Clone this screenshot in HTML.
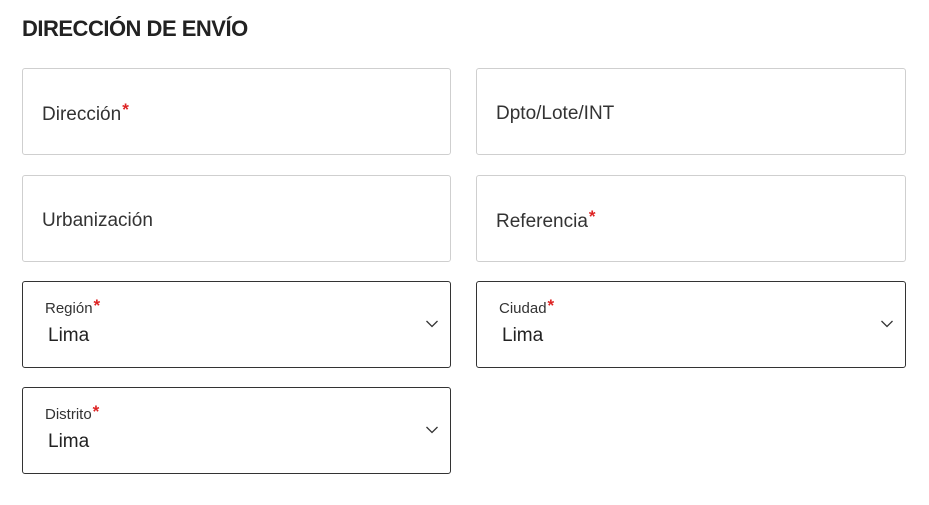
<!DOCTYPE html><html><head><style>
body{margin:0;width:929px;height:505px;background:#fff;font-family:"Liberation Sans",sans-serif;color:#2b2b2b;position:relative;overflow:hidden}
h1{position:absolute;left:22px;top:16px;margin:0;font-size:22px;font-weight:bold;color:#222;letter-spacing:-0.5px}
.b{position:absolute;box-sizing:border-box;border:1px solid #cfcfcf;border-radius:3px;width:429px;height:87px}
.s{border-color:#333}
.l{position:absolute;left:19px;font-size:19px;top:35px;color:#333}
.a{color:#d22;font-size:17px;font-weight:bold;vertical-align:top;position:relative;top:-4px;margin-left:1px}
.sl{position:absolute;left:22px;top:18px;font-size:15px;color:#333}
.v{position:absolute;left:25px;top:43px;font-size:19px;color:#222}
svg{position:absolute;right:11px;top:37px}
</style></head><body>
<h1>DIRECCIÓN DE ENVÍO</h1>
<div class="b" style="left:22px;top:68px"><span class="l">Dirección<span class="a">*</span></span></div>
<div class="b" style="left:476px;top:68px;width:430px"><span class="l" style="top:34px">Dpto/Lote/INT</span></div>
<div class="b" style="left:22px;top:175px"><span class="l" style="top:34px">Urbanización</span></div>
<div class="b" style="left:476px;top:175px;width:430px"><span class="l">Referencia<span class="a">*</span></span></div>
<div class="b s" style="left:22px;top:281px"><span class="sl">Región<span class="a">*</span></span><span class="v">Lima</span><svg width="14" height="9" viewBox="0 0 14 9"><path d="M1.5 2l5.5 5.5 5.5-5.5" fill="none" stroke="#333" stroke-width="1.3"/></svg></div>
<div class="b s" style="left:476px;top:281px;width:430px"><span class="sl">Ciudad<span class="a">*</span></span><span class="v">Lima</span><svg width="14" height="9" viewBox="0 0 14 9"><path d="M1.5 2l5.5 5.5 5.5-5.5" fill="none" stroke="#333" stroke-width="1.3"/></svg></div>
<div class="b s" style="left:22px;top:387px"><span class="sl">Distrito<span class="a">*</span></span><span class="v">Lima</span><svg width="14" height="9" viewBox="0 0 14 9"><path d="M1.5 2l5.5 5.5 5.5-5.5" fill="none" stroke="#333" stroke-width="1.3"/></svg></div>
</body></html>
